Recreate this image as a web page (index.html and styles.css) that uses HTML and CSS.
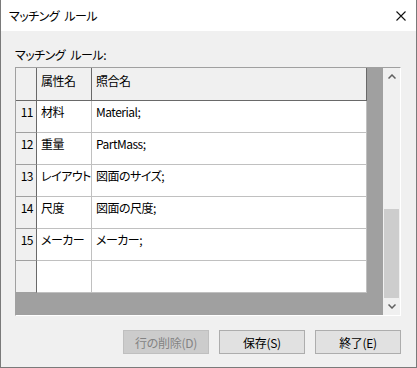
FILE: index.html
```html
<!DOCTYPE html>
<html lang="ja">
<head>
  <meta charset="UTF-8">
  <title>マッチング ルール</title>
  <link rel="stylesheet" href="styles.css">
</head>
<body>
<div class="window">
  <div class="titlebar">
    <span class="title">マッチング ルール</span>
    <svg class="close" width="10" height="10" viewBox="0 0 10 10">
      <path d="M0.5 0.5 L9.5 9.5 M9.5 0.5 L0.5 9.5" stroke="#111" stroke-width="1.1" fill="none"/>
    </svg>
  </div>

  <div class="content">
    <div class="label">マッチング ルール:</div>

    <div class="grid">
      <div class="table">
        <div class="row head">
          <div class="rh"></div>
          <div class="c1">属性名</div>
          <div class="c2">照合名</div>
        </div>
        <div class="row">
          <div class="rh">11</div>
          <div class="c1">材料</div>
          <div class="c2">Material;</div>
        </div>
        <div class="row">
          <div class="rh">12</div>
          <div class="c1">重量</div>
          <div class="c2">PartMass;</div>
        </div>
        <div class="row">
          <div class="rh">13</div>
          <div class="c1">レイアウト</div>
          <div class="c2">図面のサイズ;</div>
        </div>
        <div class="row">
          <div class="rh">14</div>
          <div class="c1">尺度</div>
          <div class="c2">図面の尺度;</div>
        </div>
        <div class="row">
          <div class="rh">15</div>
          <div class="c1">メーカー</div>
          <div class="c2">メーカー;</div>
        </div>
        <div class="row">
          <div class="rh"></div>
          <div class="c1"></div>
          <div class="c2"></div>
        </div>
      </div>

      <div class="scrollbar">
        <div class="arrow">
          <svg width="8" height="5" viewBox="0 0 8 5"><path d="M0.5 4.5 L4 1 L7.5 4.5" stroke="#606060" stroke-width="1.5" fill="none"/></svg>
        </div>
        <div class="track"><div class="thumb"></div></div>
        <div class="arrow">
          <svg width="8" height="5" viewBox="0 0 8 5"><path d="M0.5 0.5 L4 4 L7.5 0.5" stroke="#606060" stroke-width="1.5" fill="none"/></svg>
        </div>
      </div>
    </div>

    <div class="buttons">
      <button class="btn" disabled>行の削除(D)</button>
      <button class="btn">保存(S)</button>
      <button class="btn">終了(E)</button>
    </div>
  </div>
</div>
</body>
</html>
```

FILE: styles.css
```css
html, body {
  margin: 0;
  padding: 0;
  background: #f0f0f0;
}
body {
  font-family: "Noto Sans CJK JP", "Noto Sans", sans-serif;
  font-size: 12px;
  font-feature-settings: "palt";
  letter-spacing: -0.5px;
  color: #000;
}

.window {
  width: 417px;
  height: 368px;
  box-sizing: border-box;
  border: 1px solid #7a7a7a;
  border-top: none;
  background: #f0f0f0;
  display: flex;
  flex-direction: column;
}

/* タイトルバー */
.titlebar {
  height: 31px;
  background: #fff;
  display: flex;
  align-items: center;
  justify-content: space-between;
  padding: 0 10px 0 8px;
}
.title {
  line-height: 16px;
  word-spacing: 3px;
}
.close { display: block; }

.content {
  padding: 16px 15px 0 14px;
}
.label {
  line-height: 16px;
  margin-bottom: 4px;
  word-spacing: 3px;
}

/* グリッド */
.grid {
  height: 249px;
  box-sizing: border-box;
  border-top: 1px solid #a0a0a0;
  border-left: 1px solid #a0a0a0;
  border-right: 1px solid #fff;
  border-bottom: 1px solid #fff;
  display: flex;
}
.table {
  flex: 1;
  background: #a0a0a0;
}
.row {
  display: flex;
  height: 32px;
}
.row > div {
  box-sizing: border-box;
  line-height: 16px;
  padding-top: 3px;
  white-space: nowrap;
  overflow: hidden;
}
.rh {
  width: 21px;
  background: #f0f0f0;
  border-right: 1px solid #696969;
  border-bottom: 1px solid #a0a0a0;
  text-align: right;
  padding-right: 3px;
}
.c1, .c2 {
  background: #fff;
  border-right: 1px solid #c0c0c0;
  border-bottom: 1px solid #c0c0c0;
  padding-left: 4px;
}
.c1 { width: 55px; }
.c2 { width: 275px; }

.row.head { height: 33px; }
.row.head > div {
  background: #f0f0f0;
  border-right: 1px solid #696969;
  border-bottom: 1px solid #696969;
  padding-top: 5px;
}

/* スクロールバー */
.scrollbar {
  width: 17px;
  background: #f0f0f0;
  display: flex;
  flex-direction: column;
}
.arrow {
  height: 17px;
  display: flex;
  align-items: center;
  justify-content: center;
}
.arrow svg { display: block; }
.track {
  flex: 1;
  display: flex;
  flex-direction: column;
  justify-content: flex-end;
  padding: 0 1px;
}
.thumb {
  height: 89px;
  background: #cdcdcd;
}

/* ボタン */
.buttons {
  display: flex;
  justify-content: flex-end;
  gap: 10px;
  margin-top: 14px;
}
.btn {
  width: 86px;
  height: 24px;
  box-sizing: border-box;
  background: #e1e1e1;
  border: 1px solid #adadad;
  font-family: inherit;
  font-size: 12px;
  font-feature-settings: "palt";
  letter-spacing: -0.3px;
  color: #000;
  padding: 0;
}
.btn:disabled {
  background: #cccccc;
  border-color: #bfbfbf;
  color: #838383;
}
```
